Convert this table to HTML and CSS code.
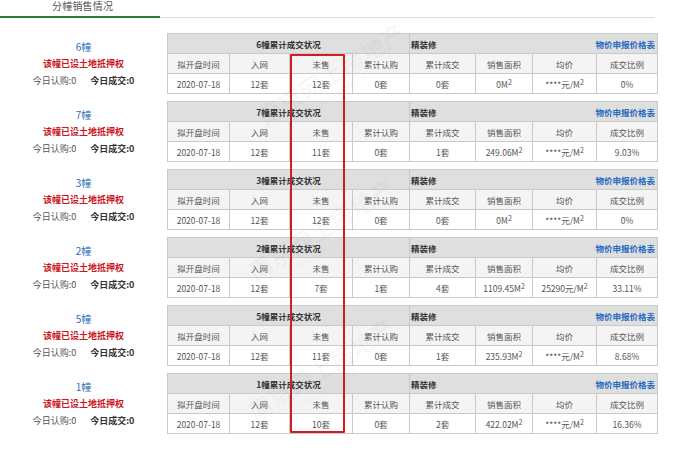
FILE: index.html
```html
<!DOCTYPE html>
<html lang="zh">
<head>
<meta charset="utf-8">
<link rel="stylesheet" href="styles.css">
</head>
<body>
<div class="page">
  <div class="tabs"><div class="tab">分幢销售情况</div></div>
  <div class="list">
    <div class="block">
      <div class="info"><div class="bname">6幢</div><div class="warn">该幢已设土地抵押权</div><div class="today"><span>今日认购:0</span><b>今日成交:0</b></div></div>
      <table>
        <colgroup><col class="c1"><col class="c2"><col class="c3"><col class="c4"><col class="c5"><col class="c6"><col class="c7"><col class="c8"></colgroup>
        <tr class="hd"><td colspan="4" class="ttl">6幢累计成交状况</td><td colspan="4"><div class="hr"><span>精装修</span><a>物价申报价格表</a></div></td></tr>
        <tr class="ch"><td>拟开盘时间</td><td>入网</td><td>未售</td><td>累计认购</td><td>累计成交</td><td>销售面积</td><td>均价</td><td>成交比例</td></tr>
        <tr class="dt"><td>2020-07-18</td><td>12套</td><td>12套</td><td>0套</td><td>0套</td><td>0M<sup>2</sup></td><td>****元/M<sup>2</sup></td><td>0%</td></tr>
      </table>
    </div>
    <div class="block">
      <div class="info"><div class="bname">7幢</div><div class="warn">该幢已设土地抵押权</div><div class="today"><span>今日认购:0</span><b>今日成交:0</b></div></div>
      <table>
        <colgroup><col class="c1"><col class="c2"><col class="c3"><col class="c4"><col class="c5"><col class="c6"><col class="c7"><col class="c8"></colgroup>
        <tr class="hd"><td colspan="4" class="ttl">7幢累计成交状况</td><td colspan="4"><div class="hr"><span>精装修</span><a>物价申报价格表</a></div></td></tr>
        <tr class="ch"><td>拟开盘时间</td><td>入网</td><td>未售</td><td>累计认购</td><td>累计成交</td><td>销售面积</td><td>均价</td><td>成交比例</td></tr>
        <tr class="dt"><td>2020-07-18</td><td>12套</td><td>11套</td><td>0套</td><td>1套</td><td>249.06M<sup>2</sup></td><td>****元/M<sup>2</sup></td><td>9.03%</td></tr>
      </table>
    </div>
    <div class="block">
      <div class="info"><div class="bname">3幢</div><div class="warn">该幢已设土地抵押权</div><div class="today"><span>今日认购:0</span><b>今日成交:0</b></div></div>
      <table>
        <colgroup><col class="c1"><col class="c2"><col class="c3"><col class="c4"><col class="c5"><col class="c6"><col class="c7"><col class="c8"></colgroup>
        <tr class="hd"><td colspan="4" class="ttl">3幢累计成交状况</td><td colspan="4"><div class="hr"><span>精装修</span><a>物价申报价格表</a></div></td></tr>
        <tr class="ch"><td>拟开盘时间</td><td>入网</td><td>未售</td><td>累计认购</td><td>累计成交</td><td>销售面积</td><td>均价</td><td>成交比例</td></tr>
        <tr class="dt"><td>2020-07-18</td><td>12套</td><td>12套</td><td>0套</td><td>0套</td><td>0M<sup>2</sup></td><td>****元/M<sup>2</sup></td><td>0%</td></tr>
      </table>
    </div>
    <div class="block">
      <div class="info"><div class="bname">2幢</div><div class="warn">该幢已设土地抵押权</div><div class="today"><span>今日认购:0</span><b>今日成交:0</b></div></div>
      <table>
        <colgroup><col class="c1"><col class="c2"><col class="c3"><col class="c4"><col class="c5"><col class="c6"><col class="c7"><col class="c8"></colgroup>
        <tr class="hd"><td colspan="4" class="ttl">2幢累计成交状况</td><td colspan="4"><div class="hr"><span>精装修</span><a>物价申报价格表</a></div></td></tr>
        <tr class="ch"><td>拟开盘时间</td><td>入网</td><td>未售</td><td>累计认购</td><td>累计成交</td><td>销售面积</td><td>均价</td><td>成交比例</td></tr>
        <tr class="dt"><td>2020-07-18</td><td>12套</td><td>7套</td><td>1套</td><td>4套</td><td>1109.45M<sup>2</sup></td><td>25290元/M<sup>2</sup></td><td>33.11%</td></tr>
      </table>
    </div>
    <div class="block">
      <div class="info"><div class="bname">5幢</div><div class="warn">该幢已设土地抵押权</div><div class="today"><span>今日认购:0</span><b>今日成交:0</b></div></div>
      <table>
        <colgroup><col class="c1"><col class="c2"><col class="c3"><col class="c4"><col class="c5"><col class="c6"><col class="c7"><col class="c8"></colgroup>
        <tr class="hd"><td colspan="4" class="ttl">5幢累计成交状况</td><td colspan="4"><div class="hr"><span>精装修</span><a>物价申报价格表</a></div></td></tr>
        <tr class="ch"><td>拟开盘时间</td><td>入网</td><td>未售</td><td>累计认购</td><td>累计成交</td><td>销售面积</td><td>均价</td><td>成交比例</td></tr>
        <tr class="dt"><td>2020-07-18</td><td>12套</td><td>11套</td><td>0套</td><td>1套</td><td>235.93M<sup>2</sup></td><td>****元/M<sup>2</sup></td><td>8.68%</td></tr>
      </table>
    </div>
    <div class="block">
      <div class="info"><div class="bname">1幢</div><div class="warn">该幢已设土地抵押权</div><div class="today"><span>今日认购:0</span><b>今日成交:0</b></div></div>
      <table>
        <colgroup><col class="c1"><col class="c2"><col class="c3"><col class="c4"><col class="c5"><col class="c6"><col class="c7"><col class="c8"></colgroup>
        <tr class="hd"><td colspan="4" class="ttl">1幢累计成交状况</td><td colspan="4"><div class="hr"><span>精装修</span><a>物价申报价格表</a></div></td></tr>
        <tr class="ch"><td>拟开盘时间</td><td>入网</td><td>未售</td><td>累计认购</td><td>累计成交</td><td>销售面积</td><td>均价</td><td>成交比例</td></tr>
        <tr class="dt"><td>2020-07-18</td><td>12套</td><td>10套</td><td>0套</td><td>2套</td><td>422.02M<sup>2</sup></td><td>****元/M<sup>2</sup></td><td>16.36%</td></tr>
      </table>
    </div>
  </div>
  <div class="wm wm1">南京网上房地产<small>njhouse.com.cn</small></div>
  <div class="wm wm2">南京网上房地产<small>njhouse.com.cn</small></div>
  <div class="wm wm3">南京网上房地产<small>njhouse.com.cn</small></div>
  <div class="highlight"></div>
</div>
</body>
</html>
```
FILE: styles.css
```css
* { box-sizing: border-box; }
html, body { margin: 0; padding: 0; background: #fff; }
body { font-family: "Noto Sans CJK SC", "Liberation Sans", sans-serif; color: #555; }
.page { position: relative; width: 700px; height: 451px; overflow: hidden; }
.tabs { display: flex; width: 655px; border-bottom: 1px solid #dcdcdc; height: 18px; }
.tab { width: 160px; height: 18px; border-bottom: 2px solid #2f7a36; padding-left: 52px; font-size: 10px; line-height: 11px; color: #555; letter-spacing: 0.2px; }
.list { display: flex; flex-direction: column; gap: 7px; margin-top: 15px; }
.block { display: flex; align-items: flex-start; }
.info { width: 167px; padding-top: 5px; text-align: center; font-size: 9px; line-height: 17px; }
.bname { color: #2a6ebc; font-size: 10px; }
.warn { color: #c8141e; font-weight: bold; }
.today { display: flex; justify-content: center; gap: 14px; color: #555; }
.today b { color: #333; }
table { border-collapse: collapse; table-layout: fixed; width: 490px; font-size: 8.5px; }
col.c1 { width: 62px; } col.c2 { width: 60px; } col.c3 { width: 63px; } col.c4 { width: 57px; }
col.c5 { width: 66px; } col.c6 { width: 57px; } col.c7 { width: 64px; } col.c8 { width: 61px; }
td { border: 1px solid #c9c9c9; height: 20px; padding: 0; text-align: center; white-space: nowrap; color: #555; line-height: 12px; }
tr.hd td { background: #dfdfdf; color: #333; font-weight: bold; }
tr.ch td { background: #f4f4f4; }
tr.dt td { background: #fff; }
.hr { display: flex; justify-content: space-between; padding: 0 2px 0 1px; }
.hr a { color: #2469c0; }
sup { font-size: 7px; line-height: 0; vertical-align: 3px; }
.highlight { position: absolute; left: 290px; top: 54px; width: 55px; height: 379px; border: 2px solid #d21c22; border-radius: 1px; }
.wm { position: absolute; color: rgba(140,140,140,0.06); font-size: 24px; font-weight: bold; transform: rotate(-32deg); white-space: nowrap; pointer-events: none; line-height: 26px; }
.wm small { display: block; font-size: 10px; font-weight: normal; padding-left: 40px; line-height: 12px; color: rgba(140,140,140,0.09); }
.wm1 { left: 250px; top: 60px; }
.wm2 { left: 240px; top: 215px; }
.wm3 { left: 240px; top: 355px; }
```
